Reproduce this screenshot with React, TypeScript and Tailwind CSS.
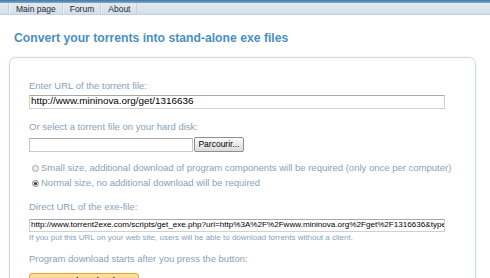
const font = { fontFamily: '"Liberation Sans", Arial, sans-serif' }

const navItems = ['Main page', 'Forum', 'About']

export default function App() {
  return (
    <div className="w-[490px] h-[278px] overflow-hidden bg-white" style={font}>
      <div className="h-[3px] bg-gradient-to-b from-[#3f78aa] to-[#7ea7c9]" />
      <div className="h-[12px] bg-gradient-to-b from-[#e3e9f0] to-[#d5dee8] border-b border-[#c3d2e0] flex items-center pl-[8px]">
        <div className="h-full border-r border-[#c4d0dc]" />
        {navItems.map((item) => (
          <div key={item} className="flex items-center h-full border-l border-[#eef2f6] px-[6px] pt-[1px] text-[8.5px] text-[#1c2a38] leading-none border-r border-r-[#c4d0dc]">
            {item}
          </div>
        ))}
      </div>

      <h1 className="mt-[17px] ml-[14px] text-[12.2px] font-bold text-[#4b8fc1] leading-none">
        Convert your torrents into stand-alone exe files
      </h1>

      <div className="mt-[13px] ml-[9px] w-[467px] h-[240px] border border-[#cbdcec] rounded-t-[7px] shadow-[0_0_2px_#dbe7f2] px-[19px] pt-[23px]">
        <div className="text-[9.5px] text-[#8a9fba] leading-none">Enter URL of the torrent file:</div>
        <div className="mt-[4px] w-[416px] h-[14px] border border-[#d0d0d0] border-t-[#a8a8a8] flex items-center px-[1px] text-[9.9px] text-black">
          http://www.mininova.org/get/1316636
        </div>

        <div className="mt-[13px] text-[9.5px] text-[#8a9fba] leading-none">Or select a torrent file on your hard disk:</div>
        <div className="mt-[6px] flex items-center">
          <div className="w-[164px] h-[14px] border border-[#c8c8c8] border-t-[#a8a8a8]" />
          <div className="ml-[1px] w-[50px] h-[15px] border border-[#8e8e8e] rounded-[2px] bg-gradient-to-b from-[#fafafa] to-[#dcdcdc] text-[8.5px] text-black flex items-center justify-center">
            Parcourir...
          </div>
        </div>

        <div className="mt-[11px] flex flex-col gap-[5px] text-[9.5px] text-[#8a9fba] leading-[10px] whitespace-nowrap">
          <label className="flex items-center gap-[2px] ml-[3px]">
            <span className="w-[7px] h-[7px] rounded-full border border-[#a8a8a8] bg-[#eeeeee]" />
            Small size, additional download of program components will be required (only once per computer)
          </label>
          <label className="flex items-center gap-[2px] ml-[3px]">
            <span className="w-[7px] h-[7px] rounded-full border border-[#8a8a8a] bg-[#e8e8e8] flex items-center justify-center">
              <span className="w-[3px] h-[3px] rounded-full bg-[#333]" />
            </span>
            Normal size, no additional download will be required
          </label>
        </div>

        <div className="mt-[14px] text-[9.5px] text-[#8a9fba] leading-none">Direct URL of the exe-file:</div>
        <div className="mt-[7px] w-[416px] h-[13px] border border-[#d0d0d0] border-t-[#a8a8a8] flex items-center px-[1px] text-[8.1px] text-black overflow-hidden whitespace-nowrap">
          http://www.torrent2exe.com/scripts/get_exe.php?url=http%3A%2F%2Fwww.mininova.org%2Fget%2F1316636&amp;type
        </div>
        <div className="mt-[2px] text-[8px] text-[#8a9fba] leading-none">
          If you put this URL on your web site, users will be able to download torrents without a client.
        </div>

        <div className="mt-[12px] text-[9.5px] text-[#8a9fba] leading-none">Program download starts after you press the button:</div>
        <div className="mt-[10px] w-[110px] h-[18px] rounded-t-[3px] border border-[#d9a13a] bg-gradient-to-b from-[#fde3a0] to-[#f7b53a] text-[9px] font-bold text-[#1a1a1a] text-center leading-[14px]">
          Start download!
        </div>
      </div>
    </div>
  )
}
